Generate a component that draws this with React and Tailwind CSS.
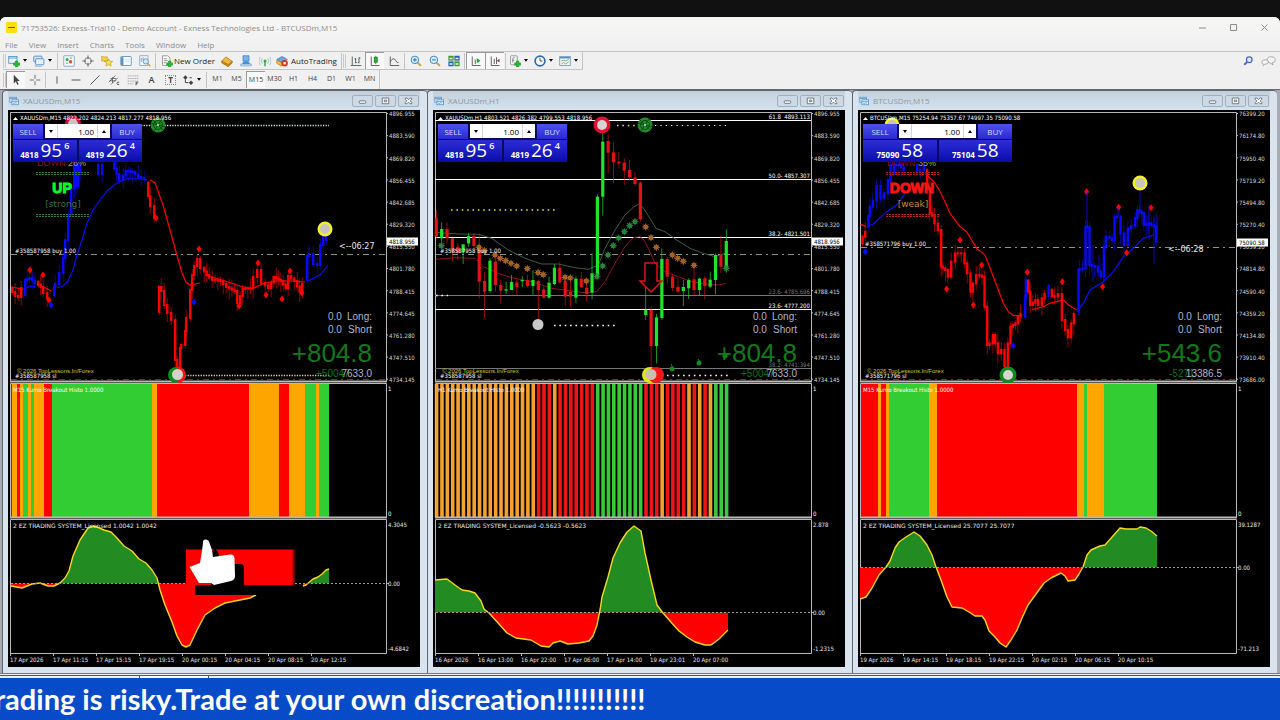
import React from 'react'

const SMALL = 'font-["DejaVu_Sans_Condensed","DejaVu_Sans",sans-serif] text-[6px] whitespace-pre'
const ARIAL = 'font-["Liberation_Sans",sans-serif]'

const metalLabels = ['4896.955', '4883.590', '4869.820', '4856.455', '4842.685', '4829.320', '4815.550', '4801.780', '4788.415', '4774.645', '4761.280', '4747.510', '4734.145']
const btcLabels = ['76399.20', '76174.80', '75950.40', '75719.20', '75494.80', '75270.40', '75039.20', '74814.80', '74590.40', '74359.20', '74134.80', '73910.40', '73686.00']

const RED = '#ff0000'
const BLUE = '#0a0aff'
const GREEN = '#32cd32'
const ORANGE = '#ffa500'

// i -> [bodyTop, bodyBottom, high, low, bull] in thirds of a pixel below y=90
const h1Candles = [
  [385, 440, 360, 445, 0], [417, 445, 397, 475, 1], [417, 445, 397, 460, 0], [445, 485, 445, 515, 0],
  [470, 488, 460, 510, 0], [463, 487, 463, 522, 1], [438, 460, 430, 470, 1], [438, 468, 430, 475, 0],
  [470, 575, 430, 625, 0], [573, 605, 545, 685, 0], [512, 603, 505, 608, 1], [515, 585, 505, 605, 0],
  [585, 602, 570, 640, 0], [598, 602, 575, 612, 1], [576, 600, 555, 600, 1], [577, 592, 570, 615, 0],
  [570, 574, 558, 592, 1], [570, 588, 555, 592, 0], [570, 588, 540, 615, 1], [573, 600, 568, 690, 0],
  [598, 623, 590, 626, 0], [578, 623, 560, 626, 1], [533, 582, 522, 585, 1], [533, 577, 515, 580, 0],
  [573, 620, 560, 648, 0], [605, 620, 570, 650, 0], [566, 623, 560, 640, 1], [566, 592, 545, 595, 0],
  [593, 612, 578, 635, 0], [550, 608, 490, 628, 1], [320, 560, 313, 565, 1], [155, 320, 120, 377, 1],
  [153, 188, 130, 250, 0], [187, 217, 155, 280, 0], [215, 220, 185, 235, 0], [218, 242, 205, 285, 0],
  [240, 262, 210, 272, 0], [262, 282, 245, 288, 0], [278, 388, 275, 395, 0], [660, 675, 590, 690, 1],
  [660, 768, 650, 840, 0], [682, 768, 672, 820, 1], [507, 684, 475, 690, 1], [507, 560, 500, 580, 0],
  [560, 594, 555, 603, 0], [591, 605, 565, 608, 0], [591, 603, 570, 648, 1], [570, 595, 565, 627, 1],
  [568, 600, 530, 615, 0], [566, 600, 563, 615, 1], [565, 588, 558, 628, 0], [569, 590, 545, 595, 1],
  [495, 570, 490, 613, 1], [495, 530, 438, 550, 0], [453, 533, 418, 548, 1],
]

const h1Stars = {
  '#b06a28': [[162, 472], [178, 482], [210, 495], [226, 505], [242, 512], [258, 520], [275, 528], [307, 536], [339, 548], [355, 554], [420, 562], [436, 564], [484, 573], [662, 411], [678, 443], [694, 472], [742, 495], [758, 505], [775, 514], [807, 526]],
  '#2e8b3e': [[49, 467], [516, 560], [533, 528], [549, 495], [565, 467], [581, 444], [598, 425], [614, 407], [630, 395], [904, 535]],
}

const goldTrails = [
  [RED, [[11, 288], [14, 292], [17, 296], [20, 297], [23, 288]]],
  [BLUE, [[24, 295], [26, 280], [31, 278], [36, 283]]],
  [RED, [[37, 282], [42, 287], [46, 293], [50, 298]]],
  [BLUE, [[53, 295], [54, 287], [58, 284], [62, 273], [64, 258], [67, 240], [70, 215], [73, 188], [74, 165]]],
  [BLUE, [[73, 188], [75, 165], [77, 186], [79, 165], [81, 172]]],
  [BLUE, [[97, 165], [101, 174], [104, 165]]],
  [BLUE, [[113, 163], [118, 174], [122, 180], [127, 171], [134, 172], [140, 177], [146, 179]]],
  [RED, [[147, 183], [149, 196], [153, 206], [156, 218]]],
  [RED, [[158, 312], [160, 287], [163, 291], [166, 305], [170, 313], [174, 320], [176, 360], [179, 372], [180, 348], [184, 345], [185, 331], [189, 318], [191, 290], [193, 275], [196, 266], [199, 259], [203, 268], [208, 275], [214, 280], [222, 281], [228, 287], [236, 291], [239, 303], [244, 289], [252, 288], [256, 277], [260, 270], [264, 283], [270, 288], [275, 277], [282, 281], [287, 288], [290, 276], [296, 281], [301, 292], [305, 284]]],
  [BLUE, [[306, 280], [308, 256], [312, 254], [316, 264], [319, 265], [322, 245], [325, 234], [328, 240]]],
]
const goldMAs = [
  [RED, [[11, 287], [17, 288], [23, 289]]],
  [BLUE, [[24, 289], [30, 286], [36, 287]]],
  [RED, [[37, 285], [44, 287], [51, 291]]],
  [BLUE, [[57, 288], [63, 286], [68, 281], [73, 270], [77, 255], [82, 240], [87, 223], [93, 210], [100, 200], [108, 190], [117, 183], [125, 179], [133, 178], [147, 180]]],
  [RED, [[150, 180], [155, 183], [159, 194], [163, 205], [170, 230], [176, 252], [182, 273], [186, 282], [190, 285], [200, 283]]],
  [RED, [[205, 275], [225, 281], [240, 286], [252, 289], [262, 284], [275, 281], [290, 281], [305, 282]]],
  [BLUE, [[308, 281], [314, 278], [320, 275], [328, 265]]],
]
const goldDiamonds = [
  [RED, [[30, 270], [43, 275], [49, 300], [156, 218], [199, 249], [258, 263], [290, 271], [266, 295], [282, 299], [302, 293], [239, 306]]],
  [BLUE, [[51, 305], [194, 302]]],
]

const btcTrails = [
  [RED, [[34, 460], [42, 440], [50, 425]]],
  [BLUE, [[52, 410], [56, 378], [65, 350], [76, 332], [88, 288], [98, 325], [110, 310], [118, 270], [125, 225]]],
  [BLUE, [[128, 250], [135, 225], [150, 225], [165, 240]]],
  [BLUE, [[198, 225], [207, 245], [218, 240], [224, 225]]],
  [RED, [[228, 240], [236, 300], [243, 370], [250, 375], [260, 400], [270, 420], [275, 530], [290, 540], [300, 560], [312, 515], [320, 490], [340, 490], [348, 520], [358, 550], [365, 605], [375, 580], [385, 555], [400, 560], [408, 650], [415, 765], [425, 760], [432, 735], [440, 760], [450, 790], [460, 780], [470, 828], [478, 760], [485, 710], [500, 700], [508, 680], [520, 672]]],
  [BLUE, [[522, 680], [524, 620], [527, 570]]],
  [RED, [[531, 572], [537, 605], [545, 645], [560, 630], [572, 645], [580, 625], [590, 612]]],
  [BLUE, [[592, 618], [598, 588]]],
  [RED, [[602, 600], [610, 618], [620, 620], [632, 612], [642, 690], [650, 720], [660, 742], [668, 700], [678, 672]]],
  [BLUE, [[682, 665], [685, 540], [703, 535], [709, 410], [715, 412], [721, 525], [740, 530], [758, 560], [764, 470], [775, 440], [790, 450], [797, 382], [808, 380], [818, 430], [830, 465], [840, 415], [852, 408], [865, 360], [878, 370], [885, 405], [900, 400], [915, 410], [921, 455]]],
]
const btcMAs = [
  [RED, [[32, 403], [40, 406], [48, 410]]],
  [BLUE, [[55, 408], [70, 402], [85, 388], [110, 365], [140, 345], [165, 310]]],
  [RED, [[232, 258], [250, 273], [265, 295], [280, 325], [300, 370], [330, 410], [350, 425], [380, 475], [405, 495], [430, 560], [460, 640], [475, 665], [490, 677], [510, 677]]],
  [RED, [[545, 660], [580, 650], [600, 640], [640, 630], [655, 645], [680, 660]]],
  [BLUE, [[680, 665], [700, 640], [720, 600], [760, 575], [790, 545], [820, 500], [850, 475], [880, 445], [910, 435]]],
]
const btcDiamonds = [
  [RED, [[290, 597], [330, 450], [370, 645], [395, 525], [532, 547], [637, 575], [710, 305], [806, 352], [903, 353], [830, 488], [758, 590]]],
  [BLUE, [[46, 485], [490, 768]]],
]

const h1Upper = [[32, 427], [100, 432], [160, 433], [200, 445], [250, 480], [300, 505], [350, 522], [400, 522], [450, 533], [490, 538], [520, 525], [540, 475], [570, 420], [600, 375], [625, 352], [640, 343], [652, 350], [675, 385], [693, 415], [720, 425], [755, 450], [795, 475], [835, 490], [870, 500], [900, 490]]
const h1Lower = [[32, 508], [90, 503], [150, 505], [175, 530], [220, 550], [260, 563], [320, 575], [380, 595], [440, 603], [480, 608], [515, 605], [540, 575], [570, 520], [600, 470], [625, 443], [645, 440], [657, 450], [670, 475], [690, 520], [720, 545], [760, 560], [800, 575], [850, 583], [880, 585], [903, 580]]

const goldWave = [[11, 586], [22, 588], [32, 584], [40, 583], [48, 586], [54, 586], [60, 583], [65, 578], [69, 571], [73, 556], [80, 540], [88, 528], [93, 526], [97, 527], [104, 530], [111, 532], [117, 538], [124, 546], [132, 551], [139, 559], [146, 563], [152, 570], [157, 578], [160, 590], [165, 605], [172, 622], [177, 636], [182, 645], [186, 647], [190, 645], [197, 630], [205, 615], [215, 608], [225, 603], [240, 600], [250, 598], [256, 595]]
const goldWaveTail = [[303, 586], [306, 585], [313, 579], [318, 577], [322, 574], [326, 570], [329, 569]]
const h1Wave = [[435, 580], [447, 579], [455, 585], [462, 590], [469, 591], [475, 593], [481, 601], [484, 609], [489, 613], [499, 624], [507, 633], [516, 638], [531, 640], [541, 646], [549, 647], [553, 643], [560, 641], [568, 644], [579, 643], [589, 641], [593, 636], [597, 625], [600, 610], [602, 597], [608, 577], [613, 558], [620, 543], [627, 532], [634, 526], [641, 531], [645, 553], [651, 580], [657, 605], [663, 613], [670, 621], [679, 631], [687, 637], [695, 642], [705, 645], [711, 645], [719, 639], [728, 630]]
const btcWave = [[860, 599], [866, 597], [872, 588], [879, 575], [886, 567], [890, 561], [895, 548], [899, 542], [906, 537], [914, 532], [920, 536], [927, 545], [932, 555], [936, 567], [941, 580], [947, 597], [952, 607], [962, 608], [969, 612], [975, 616], [982, 616], [985, 620], [989, 631], [995, 637], [1000, 643], [1006, 647], [1011, 640], [1017, 630], [1022, 618], [1028, 605], [1036, 594], [1044, 583], [1051, 578], [1061, 573], [1065, 576], [1068, 581], [1075, 580], [1079, 574], [1083, 567], [1087, 555], [1091, 550], [1100, 546], [1105, 545], [1112, 537], [1120, 528], [1126, 529], [1137, 529], [1140, 527], [1146, 528], [1151, 531], [1157, 536]]

// [from, to, color]
const goldBlocks = [[10, 12, RED], [12, 17, ORANGE], [17, 20, RED], [20, 23, ORANGE], [23, 28, GREEN], [28, 31, ORANGE], [31, 34, GREEN], [34, 44, ORANGE], [44, 52, RED], [52, 152, GREEN], [152, 157, ORANGE], [157, 249, RED], [249, 279, ORANGE], [279, 289, RED], [289, 305, ORANGE], [305, 316, GREEN], [316, 319, ORANGE], [319, 329, GREEN]]
const btcBlocks = [[860, 878, RED], [878, 881, ORANGE], [881, 886, RED], [886, 889, ORANGE], [889, 929, GREEN], [929, 937, ORANGE], [937, 1077, RED], [1077, 1084, ORANGE], [1084, 1087, GREEN], [1087, 1104, ORANGE], [1104, 1157, GREEN]]
const h1Blocks = Array.from({ length: 55 }, (_, i) => {
  let color = '#f01515'
  if (i < 19 || [22, 42, 47, 49, 51].includes(i)) color = '#f5a030'
  else if ((i >= 30 && i < 39) || i >= 52) color = '#3cc83c'
  const x = 434.8 + i * 5.37
  return [x, x + 3.6, color]
})

const toPoints = (pts) => pts.map((p) => p.join(',')).join(' ')
const thirds = (ox) => ([x, y]) => [ox + x / 3, 90 + y / 3]
const mapSeries = (series, ox) => series.map(([color, pts]) => [color, pts.map(thirds(ox))])

// Small stepped bodies with wicks between the anchor points
const Trail = ({ color, points }) => {
  const bars = []
  let n = 0
  for (let i = 0; i < points.length - 1; i++) {
    const [x0, y0] = points[i]
    const [x1, y1] = points[i + 1]
    const steps = Math.max(1, Math.round((x1 - x0) / 2.7))
    for (let s = 0; s < steps; s++) {
      const ya = y0 + ((y1 - y0) * s) / steps
      const yb = y0 + ((y1 - y0) * (s + 1)) / steps
      const up = 1 + ((n * 7) % 8)
      const down = 2 + ((n * 5) % 9)
      bars.push({ x: x0 + ((x1 - x0) * s) / steps, top: Math.min(ya, yb) - 1, bottom: Math.max(ya, yb) + 1, up, down })
      n++
    }
  }
  return (
    <g fill={color}>
      {bars.map((b, i) => (
        <React.Fragment key={i}>
          <rect x={b.x} y={b.top} width="2.4" height={b.bottom - b.top} />
          <rect x={b.x + 0.8} y={b.top - b.up} width="0.8" height={b.bottom - b.top + b.up + b.down} opacity="0.7" />
        </React.Fragment>
      ))}
    </g>
  )
}

const Diamond = ({ x, y, color }) => (
  <path d={`M${x} ${y - 3.5}L${x + 2.6} ${y}L${x} ${y + 3.5}L${x - 2.6} ${y}Z`} fill={color} />
)

const Star = ({ x, y, color }) => (
  <g stroke={color}>
    <path
      d={`M${x - 3.5} ${y}h7M${x} ${y - 3.5}v7M${x - 2.5} ${y - 2.5}l5 5M${x + 2.5} ${y - 2.5}l-5 5`}
      strokeWidth="0.9"
    />
    <circle cx={x} cy={y} r="1.8" fill="none" strokeWidth="1.2" />
  </g>
)

const Wheel = ({ x, y }) => (
  <g stroke="#0b4d12" strokeWidth="1">
    <circle cx={x} cy={y} r="7.5" fill="#1f8c2b" stroke="none" />
    <circle cx={x} cy={y} r="4.5" fill="none" />
    <path d={`M${x - 7} ${y - 2}L${x + 7} ${y + 2}M${x - 4} ${y + 6}L${x + 4} ${y - 6}M${x - 5} ${y - 5}L${x + 5} ${y + 5}`} />
    <circle cx={x} cy={y} r="1" fill="#d8e8d0" stroke="none" />
  </g>
)

const Ring = ({ x, y, r = 7.5, color, core = '#c8c4c0' }) => (
  <>
    <circle cx={x} cy={y} r={r} fill={color} />
    <circle cx={x} cy={y} r={5} fill={core} />
  </>
)

const Dots = ({ x1, x2, y, color = '#fff', step = 5.37, size = 1.6 }) => (
  <line x1={x1} x2={x2} y1={y} y2={y} stroke={color} strokeWidth={size} strokeDasharray={`${size} ${step - size}`} />
)

const Series = ({ trails, mas, diamonds }) => (
  <>
    {mas.map(([color, pts], i) => (
      <polyline key={`m${i}`} points={toPoints(pts)} fill="none" stroke={color} strokeWidth="1.2" />
    ))}
    {trails.map(([color, pts], i) => <Trail key={`t${i}`} color={color} points={pts} />)}
    {diamonds.map(([color, pts]) => pts.map(([x, y]) => <Diamond key={`${x}-${y}`} x={x} y={y} color={color} />))}
  </>
)

const GoldM15 = () => (
  <>
    <Dots x1={141} x2={329} y={125.5} step={2.6} size={1.3} color="#cfe0cf" />
    <Series trails={goldTrails} mas={goldMAs} diamonds={goldDiamonds} />
    <Ring x={73} y={124} color="#d01030" r={8} />
    <Wheel x={158} y={125} />
    <Ring x={325} y={229} color="#f5f020" />
    <Dots x1={185} x2={330} y={375.5} step={2.6} size={1.3} color="#e8c8b0" />
    <circle cx="176" cy="375" r="8" fill="#0f8a1e" />
    <path d="M178 367a8 8 0 0 1 0 16z" fill="#f01818" />
    <circle cx="177.500" cy="374.500" r="5.500" fill="#d8d0cc" />
  </>
)

const GoldH1 = () => {
  const place = thirds(425)
  const levels = [
    [120.5, '61.8  4893.113', '#fff'], [179.5, '50.0- 4857.307', '#fff'], [237.5, '38.2- 4821.501', '#fff'],
    [295.5, '23.6- 4785.696', '#777'], [309.5, '23.6- 4777.200', '#fff'], [368.5, '38.2- 4741.394', '#777'],
  ]
  return (
    <>
      {levels.map(([y, label, color]) => (
        <g key={label}>
          <line x1="435" x2="811" y1={y} y2={y} stroke={color} strokeWidth="1" />
          <text x="810" y={y - 2} textAnchor="end" fill={color} className={SMALL}>{label}</text>
        </g>
      ))}
      <polyline points={toPoints(h1Upper.map(place))} fill="none" stroke="#3f5a46" strokeWidth="1" />
      <polyline points={toPoints(h1Lower.map(place))} fill="none" stroke="#8e1424" strokeWidth="1" />
      {h1Candles.map(([top, bottom, high, low, bull], i) => {
        const x = 436.3 + i * 5.37
        return (
          <g key={i} fill={bull ? '#1fe52a' : '#e01414'}>
            <rect x={x - 0.4} y={90 + high / 3} width="0.8" height={(low - high) / 3} opacity="0.8" />
            <rect x={x - 1.6} y={90 + top / 3} width="3.2" height={(bottom - top) / 3} />
          </g>
        )
      })}
      {Object.entries(h1Stars).map(([color, pts]) =>
        pts.map(place).map(([x, y]) => <Star key={`${x}-${y}`} x={x} y={y} color={color} />)
      )}
      <Dots x1={451} x2={556} y={210} color="#e8e040" />
      <Dots x1={554} x2={615} y={325.5} />
      <Dots x1={617} x2={640} y={125.5} color="#e8e040" />
      <Dots x1={655} x2={728} y={125.5} size={1.2} />
      <Dots x1={436} x2={448} y={295.5} />
      <Dots x1={667} x2={728} y={375.5} />
      <Ring x={602} y={125} r={8.5} color="#e01030" core="#d8d4d4" />
      <Wheel x={645} y={125} />
      <circle cx="538" cy="324.500" r="5.500" fill="#c8c8c8" />
      <circle cx="650" cy="375" r="8" fill="#d8e81c" />
      <circle cx="656" cy="375" r="8" fill="#f01818" />
      <circle cx="651" cy="374.500" r="5.500" fill="#c8c0b0" />
      <path d="M645 263H657V281H662L651 292L640 281H645Z" fill="none" stroke="#e81010" strokeWidth="1.500" />
      <g fill="#178a20">
        <circle cx="672" cy="369" r="2.500" />
        <circle cx="699" cy="363" r="2.500" />
        <circle cx="725" cy="356" r="2.500" />
      </g>
      <path d="M671 364l2 4M698 359l2 3M724 351l2 4" stroke="#178a20" />
    </>
  )
}

const BtcM15 = () => (
  <>
    <Series trails={mapSeries(btcTrails, 850)} mas={mapSeries(btcMAs, 850)} diamonds={mapSeries(btcDiamonds, 850)} />
    <path d="M1087 192V226M1118 208V218M1140 190V210M1149 205V240M1154 216V264M1157 215V238M1093 245V282M1099 255V276M1104 258V280" stroke={BLUE} strokeWidth="0.800" />
    <Ring x={892} y={125} color="#f5f020" />
    <Ring x={1140} y={183} color="#f5f020" />
    <Ring x={1008} y={375} r={8.5} color="#0f8a1e" core="#d8d4d0" />
  </>
)

const Trend = ({ x, trend, strength, percent, color, lineColor, strengthColor }) => (
  <g>
    <text x={x + 1} y="166" fill="#8e1018" className={`${ARIAL} text-[9px]`}>
      DOWN <tspan fill="#b0a030">{percent}</tspan>
    </text>
    {[172, 174, 214, 216].map((y) => (
      <line key={y} x1={x} x2={x + 53} y1={y + 0.5} y2={y + 0.5} stroke={lineColor} strokeDasharray="2 1" />
    ))}
    <text x={x + 26} y="193" textAnchor="middle" fill={color} stroke={color} strokeWidth="1" className='font-["Liberation_Sans_Narrow","Liberation_Sans",sans-serif] text-[14px] font-bold'>{trend}</text>
    <text x={x + 27} y="207" textAnchor="middle" fill={strengthColor} className='font-["DejaVu_Sans",sans-serif] text-[9px]'>{strength}</text>
  </g>
)

const PricePane = ({ win, children }) => {
  const { x, labels, header, bidLine, order, tag, tagY, timer, profit, sub, total, trend } = win
  return (
    <svg viewBox={`${x} 110 412 273`} className="block w-full">
      <g fill="none" stroke="#b8b8b8" strokeWidth="1">
        <path d={`M${x + 2.5} 381V112.5H${x + 378.5}V381`} />
        <path d={`M${x + 2} 381.5H${x + 379}`} strokeWidth="2" />
      </g>
      <line x1={x + 3} x2={x + 378} y1={bidLine} y2={bidLine} stroke="#7d9882" strokeDasharray="6 4 2 4" />
      <line x1={x + 3} x2={x + 378} y1="379.500" y2="379.500" stroke="#a01824" strokeDasharray="6 4 2 4" />
      {children}
      {trend && <Trend x={x + 28} {...trend} />}
      <g fill="#fff" className={SMALL}>
        <path d={`M${x + 5} 120l2.500 -3l2.500 3z`} />
        <text x={x + 12} y="120">{header}</text>
        {labels.map((label, i) => (
          <g key={label}>
            <text x={x + 381} y={116.3 + i * 22.15} fill="#d8d8d8">{label}</text>
            <line x1={x + 378} x2={x + 380} y1={113.5 + i * 22.15} y2={113.5 + i * 22.15} stroke="#b8b8b8" />
          </g>
        ))}
        <rect x={x + 379} y={tagY - 4} width="31" height="8" />
        <text x={x + 381} y={tagY + 2} fill="#000">{tag}</text>
        <text x={x + 7} y={bidLine - 1.5}>{order} buy 1.00</text>
        <text x={x + 7} y="378">{order} sl</text>
      </g>
      <text x={x + 9} y="373" fill="#d8c82c" className={`${ARIAL} text-[6px]`}>© 2026 TopLessons.In/Forex</text>
      {timer && <text x={timer.x} y={timer.y} fill="#e8e8e8" className='font-["DejaVu_Sans",sans-serif] text-[8px]'>&lt;--{timer.value}</text>}
      <g fill="#b0b4cc" className={`${ARIAL} text-[10px]`}>
        <text x={x + 320} y="320">0.0</text>
        <text x={x + 364} y="320" textAnchor="end">Long:</text>
        <text x={x + 320} y="333">0.0</text>
        <text x={x + 364} y="333" textAnchor="end">Short</text>
        <text x={win.subX} y="377" fill="#14701c">{sub}</text>
        <text x={x + 364} y="377" textAnchor="end">{total}</text>
      </g>
      <text x={x + 364} y="362" textAnchor="end" fill="#127a18" className={`${ARIAL} text-[26px]`}>{profit}</text>
    </svg>
  )
}

const HistoPane = ({ win, blocks }) => (
  <svg viewBox={`${win.x} 383 412 136`} className="block w-full">
    {blocks.map(([from, to, color]) => (
      <rect key={from} x={from} y="384" width={to - from} height="133" fill={color} />
    ))}
    <g fill="none" stroke="#b8b8b8">
      <path d={`M${win.x + 2.5} 517V383.5H${win.x + 378.5}V517`} />
      <path d={`M${win.x + 2} 517.500H${win.x + 379}`} strokeWidth="2" />
    </g>
    <g fill="#fff" className={SMALL}>
      <text x={win.x + 5} y="391.500">{win.period} Kumo Breakout Histo 1.0000</text>
      <text x={win.x + 380} y="391">1</text>
      <text x={win.x + 380} y="515.500">0</text>
    </g>
  </svg>
)

const Wave = ({ id, points, zero }) => {
  const first = points[0][0]
  const last = points[points.length - 1][0]
  const area = `${first},${zero} ${toPoints(points)} ${last},${zero}`
  return (
    <>
      <clipPath id={`${id}-up`}><rect x={first} y="520" width={last - first} height={zero - 520} /></clipPath>
      <clipPath id={`${id}-down`}><rect x={first} y={zero} width={last - first} height={654 - zero} /></clipPath>
      <polygon points={area} fill="#228b22" clipPath={`url(#${id}-up)`} />
      <polygon points={area} fill="#ff0000" clipPath={`url(#${id}-down)`} />
      <polyline points={toPoints(points)} fill="none" stroke="#f5d820" strokeWidth="1.400" strokeLinejoin="round" />
    </>
  )
}

const LikeBadge = () => (
  <>
    <defs>
      <linearGradient id="badge-fade">
        <stop offset="0.970" stopColor="#ff0000" />
        <stop offset="1" stopColor="#400000" />
      </linearGradient>
    </defs>
    <rect x="186" y="549.500" width="109" height="35.500" fill="url(#badge-fade)" />
    <path d="M195 585V595H244V568Q244 564 240 564H234L219 557Q219 551 215 549L211 552V585Z" fill="#000" />
    <rect x="195" y="585" width="107" height="10" fill="#000" />
    <path d="M203 543C202 539 208 538 209.500 543L212 550L213 557L230 554.500Q234 554 234.500 558L235 576Q235 580 231 581L214 585L211 583L199 583L189.500 567Q196 564.500 200 563Q202 552 203 543Z" fill="#fff" />
  </>
)

const WavePane = ({ win, points, tail }) => (
  <svg viewBox={`${win.x} 519 412 148`} className="block w-full">
    <path d={`M${win.x + 2.5} 653.500V519.500H${win.x + 378.5}V653.500H${win.x + 2}`} fill="none" stroke="#b8b8b8" />
    <Wave id={win.id} points={points} zero={win.zero} />
    {tail && <Wave id={`${win.id}-tail`} points={tail} zero={win.zero} />}
    <line x1={win.x + 3} x2={win.x + 381} y1={win.zero} y2={win.zero} stroke="#9a9a9a" strokeDasharray="2 2" />
    {tail && <LikeBadge />}
    <text x={win.x + 5} y="528" fill="#e8e8e8" className='font-["DejaVu_Sans",sans-serif] text-[6px]'>2 EZ TRADING SYSTEM_Licensed {win.wave}</text>
    <g fill="#e8e8e8" className={SMALL}>
      <text x={win.x + 380} y="526.500">{win.max}</text>
      <text x={win.x + 380} y={win.zero + 2}>0.00</text>
      <text x={win.x + 380} y="651">{win.min}</text>
      {win.times.map((time, i) => (
        <g key={time}>
          <line x1={win.x + 2.5 + i * 43} x2={win.x + 2.5 + i * 43} y1="653" y2="656" stroke="#b8b8b8" />
          <text x={win.x + 2 + i * 43} y="662">{time}</text>
        </g>
      ))}
    </g>
  </svg>
)

const Quote = ({ small, big, sup }) => (
  <button className="flex h-[22px] flex-1 items-end justify-center gap-[2px] bg-linear-to-b from-[#2c2cd8] to-[#0a0aa8] pb-[2px] text-white">
    <span className="text-[8px] leading-[10px] font-bold">{small}</span>
    <span className="text-[19px] leading-[19px]">{big}</span>
    {sup && <span className="self-start text-[9px] leading-[11px] font-semibold">{sup}</span>}
  </button>
)

const OneClick = ({ win }) => (
  <div className={`absolute top-[14px] left-[5px] flex flex-col gap-px bg-[#0a0a60] ${win.wide ? 'w-[149px]' : 'w-[129px]'}`}>
    <div className="flex h-[15px] gap-[2px]">
      <button className="flex-1 bg-linear-to-b from-[#5050f0] to-[#2828d0] text-[8px] leading-[15px] text-[#d8d8ff]">SELL</button>
      <div className={`flex h-[14px] items-center bg-white text-black ${win.wide ? 'w-[77px]' : 'w-[65px]'}`}>
        <button aria-label="Decrease volume" className="flex h-full w-[13px] items-center justify-center border-r border-gray-300">
          <svg viewBox="0 0 4 3" className="w-[4px]"><path d="M0 0h4L2 3z" /></svg>
        </button>
        <input aria-label="Volume" defaultValue="1.00" className="h-full min-w-0 flex-1 pr-[3px] text-right text-[8px] outline-none" />
        <button aria-label="Increase volume" className="flex h-full w-[13px] items-center justify-center border-l border-gray-300">
          <svg viewBox="0 0 4 3" className="w-[4px]"><path d="M0 3h4L2 0z" /></svg>
        </button>
      </div>
      <button className="flex-1 bg-linear-to-b from-[#5050f0] to-[#2828d0] text-[8px] leading-[15px] text-[#d8d8ff]">BUY</button>
    </div>
    <div className="flex gap-[2px]">
      {win.quotes.map((q) => <Quote key={q.small} {...q} />)}
    </div>
  </div>
)

const up = { trend: 'UP', strength: '[strong]', percent: '26%', color: '#00ff2a', lineColor: '#2c7a34', strengthColor: '#3c6e44' }
const down = { trend: 'DOWN', strength: '[weak]', percent: '35%', color: '#ff1414', lineColor: '#c01818', strengthColor: '#d08838' }
const goldQuotes = [{ small: '4818', big: '95', sup: '6' }, { small: '4819', big: '26', sup: '4' }]

const windows = [
  {
    id: 'gold-m15', title: 'XAUUSDm,M15', period: 'M15', x: 8, labels: metalLabels, header: 'XAUUSDm,M15   4822.202  4824.213  4817.277  4818.956',
    bidLine: 254.5, order: '#358587958', tag: '4818.956', tagY: 241.5, timer: { x: 339, y: 249, value: '06:27' },
    profit: '+804.8', sub: '+50047', subX: 316, total: '7633.0', trend: up, quotes: goldQuotes,
    zero: 583.5, wave: '1.0042 1.0042', max: '4.3045', min: '-4.6842', chart: GoldM15, blocks: goldBlocks, points: goldWave, tail: goldWaveTail,
    times: ['17 Apr 2026', '17 Apr 11:15', '17 Apr 15:15', '17 Apr 19:15', '20 Apr 00:15', '20 Apr 04:15', '20 Apr 08:15', '20 Apr 12:15'],
  },
  {
    id: 'gold-h1', title: 'XAUUSDm,H1', period: 'H1', x: 433, labels: metalLabels, header: 'XAUUSDm,H1   4803.521  4826.382  4799.553  4818.956',
    bidLine: 254.5, order: '#358587958', tag: '4818.956', tagY: 241.5,
    profit: '+804.8', sub: '+50047', subX: 741, total: '7633.0', quotes: goldQuotes,
    zero: 612.5, wave: '-0.5623 -0.5623', max: '2.878', min: '-1.2315', chart: GoldH1, blocks: h1Blocks, points: h1Wave,
    times: ['16 Apr 2026', '16 Apr 13:00', '16 Apr 22:00', '17 Apr 06:00', '17 Apr 14:00', '19 Apr 23:01', '20 Apr 07:00'],
  },
  {
    id: 'btc-m15', title: 'BTCUSDm,M15', period: 'M15', x: 858, labels: btcLabels, header: 'BTCUSDm,M15   75254.94  75357.67  74997.35  75090.58', wide: true,
    bidLine: 247.5, order: '#358571796', tag: '75090.58', tagY: 242.5, timer: { x: 1168, y: 252, value: '06:28' },
    profit: '+543.6', sub: '-5271', subX: 1169, total: '13386.5', trend: down, quotes: [{ small: '75090', big: '58' }, { small: '75104', big: '58' }],
    zero: 567.5, wave: '25.7077 25.7077', max: '39.1287', min: '-71.213', chart: BtcM15, blocks: btcBlocks, points: btcWave,
    times: ['19 Apr 2026', '19 Apr 14:15', '19 Apr 18:15', '19 Apr 22:15', '20 Apr 02:15', '20 Apr 06:15', '20 Apr 10:15'],
  },
]

const frameIcons = {
  Minimize: <rect x="4" y="6" width="8" height="3" rx="1" />,
  Restore: <path d="M4 2.500h8v7H4zM6.500 5h3v2h-3z" />,
  Close: <path d="M4 2.500h2l2 2l2 -2h2v1.500l-2 2l2 2v1.500h-2l-2 -2l-2 2H4V8l2 -2l-2 -2z" />,
}

const ChartWindow = ({ win }) => {
  const Chart = win.chart
  return (
    <section className="rounded-t border-t border-l border-[#5d6670] bg-[#d9e4ee] pr-[7px] pb-[6px] pl-[5px]">
      <header className="flex h-[19px] items-center gap-1 bg-linear-to-b from-[#c3d0da] to-[#d4e3ef] pt-px">
        <svg viewBox="0 0 12 12" className="ml-px w-[10px]" fill="#e6f1fa" stroke="#5b97c9">
          <rect x="1" y="1.500" width="8" height="6" />
          <path d="M1 3h8" />
          <rect x="3.500" y="4.500" width="8" height="6" />
          <path d="M3.500 6.500h8M5 8.500l1.500 0.500l1.500 -1l1.500 0.500" />
        </svg>
        <h2 className="flex-1 text-[8px] text-[#8b98a4]">{win.title}</h2>
        <div className="flex gap-[2px] pr-px">
          {Object.entries(frameIcons).map(([name, shape]) => (
            <button key={name} aria-label={name} className="flex h-[12px] w-[21px] items-center justify-center rounded-[2px] border border-[#9fb0c0] bg-[#cddae5]">
              <svg viewBox="0 0 16 12" className="w-[13px]" fill="#fff" stroke="#56626e">{shape}</svg>
            </button>
          ))}
        </div>
      </header>
      <div className="relative bg-black">
        <PricePane win={win}><Chart /></PricePane>
        <HistoPane win={win} blocks={win.blocks} />
        <WavePane win={win} points={win.points} tail={win.tail} />
        <OneClick win={win} />
      </div>
    </section>
  )
}

const plus = <path d="M10 8h3v2.500h2.500v3H13V16h-3v-2.500H7.500v-3H10z" fill="#1fbf2a" stroke="#0c8a18" strokeWidth="0.700" />
const icons = {
  newChart: <><rect x="1" y="2" width="11" height="9" fill="#eaf3fb" stroke="#3a86c8" /><path d="M1 4h11" stroke="#3a86c8" />{plus}</>,
  profiles: <><rect x="1" y="1.500" width="11" height="8" rx="1" fill="#cfe4f7" stroke="#3a7cc0" /><rect x="3.500" y="5" width="11" height="8" rx="1" fill="#e6f1fb" stroke="#3a7cc0" /><path d="M3 13.500v1.500h9" stroke="#7aa6d0" /></>,
  marketWatch: <><rect x="1" y="1" width="14" height="14" rx="1" fill="#f4faff" stroke="#5c9ad0" /><circle cx="5.500" cy="6" r="2" fill="#2fae3a" /><circle cx="10" cy="9" r="2.200" fill="#e0492c" /><path d="M9 4h3M4 11h3" stroke="#2fae3a" /></>,
  dataWindow: <><circle cx="8" cy="8" r="4.500" fill="none" stroke="#777" strokeWidth="1.300" /><path d="M8 0.500v5M8 10.500v5M0.500 8h5M10.500 8h5" stroke="#666" strokeWidth="1.300" /></>,
  navigator: <><path d="M1 1.500l2.500 1h5V8H1z" fill="#f6d24a" stroke="#b8901c" strokeWidth="0.800" /><path d="M10 5l1.500 3.200l4 0.300l-3 2.500l1 3.800l-3.500 -2l-3.500 2l1 -3.800L4.500 8.500l4 -0.300z" fill="#ffe14d" stroke="#b8901c" strokeWidth="0.800" /></>,
  terminal: <><rect x="1" y="2" width="14" height="12" rx="1" fill="#f5f9fd" stroke="#4282b8" /><rect x="1.500" y="3" width="3" height="10.500" fill="#4f8ec6" /><path d="M7 6h6M7 8.500h6" stroke="#c8dcec" /></>,
  tester: <><rect x="1" y="1" width="11" height="13" fill="#f0f5fa" stroke="#7f9fba" /><path d="M3 4v5M5.500 3v4" stroke="#5f86a8" /><circle cx="9" cy="8.500" r="3.500" fill="#cfe8f8" stroke="#4a8ac0" /><path d="M11.500 11l3.500 4" stroke="#d0a030" strokeWidth="2" /></>,
  newOrder: <><path d="M2 1h7l3 3v10H2z" fill="#f6f6f6" stroke="#888" /><path d="M4 5h4M4 7.500h5M4 10h3" stroke="#888" />{plus}</>,
  book: <><path d="M1 8l5.500 -5.500l8.500 6l-5.500 4.500z" fill="#f0b83a" stroke="#a87414" /><path d="M1 8v2.500l8.500 5L15 10.500V8.500L9.500 13z" fill="#d08e1c" stroke="#a87414" /></>,
  account: <><path d="M4 1h8v7H4z" fill="#7ab4ea" stroke="#3a80c4" /><path d="M3 12q0 -4 5 -4t5 4z" fill="#4a90d8" /><path d="M1 12h14v2.500H1z" fill="#cfe2f4" stroke="#5c8ebc" strokeWidth="0.800" /></>,
  signals: <><circle cx="8" cy="8" r="2" fill="#38a848" /><path d="M4.500 4.500a5 5 0 0 0 0 7M11.500 4.500a5 5 0 0 1 0 7M2 2.500a8 8 0 0 0 0 11M14 2.500a8 8 0 0 1 0 11" fill="none" stroke="#8fb4b4" /><path d="M8 9v6" stroke="#38a848" strokeWidth="2" /></>,
  auto: <><path d="M1 6l7 -4l7 4l-7 4z" fill="#6aa8dc" stroke="#3a78b0" /><path d="M1 7v4l6 4V10z" fill="#f0c040" stroke="#b08820" /><circle cx="11.500" cy="11" r="4.300" fill="#e03020" /><rect x="10" y="9.500" width="3" height="3" fill="#fff" /></>,
  bars: <path d="M3 2v12h12M1 14h2M7.500 4v7M7.500 5H6M7.500 10H9M12 3v8M12 4h2M12 10h-1.500" fill="none" stroke="#4d5a50" strokeWidth="1.200" />,
  candles: <><path d="M3 2v12h11" fill="none" stroke="#555" strokeWidth="1.200" /><path d="M9 1v11" stroke="#0d7a1c" /><rect x="7" y="3" width="4" height="6.500" fill="#25b535" stroke="#0d7a1c" /></>,
  line: <path d="M3 2v12h12M3 9q4 -7 7 -2t4 3" fill="none" stroke="#555" strokeWidth="1.200" />,
  zoomIn: <><path d="M9.500 9.500l5 5" stroke="#d0a030" strokeWidth="2.500" /><circle cx="6.500" cy="6.500" r="5" fill="#d4ecfb" stroke="#3a88c4" strokeWidth="1.300" /><path d="M4 6.500h5M6.500 4v5" stroke="#2a70b0" strokeWidth="1.300" /></>,
  zoomOut: <><path d="M9.500 9.500l5 5" stroke="#d0a030" strokeWidth="2.500" /><circle cx="6.500" cy="6.500" r="5" fill="#d4ecfb" stroke="#3a88c4" strokeWidth="1.300" /><path d="M4 6.500h5" stroke="#2a70b0" strokeWidth="1.300" /></>,
  tile: <><rect x="0.500" y="1" width="7" height="6.500" fill="#3c9a34" /><rect x="8.500" y="1" width="7" height="6.500" fill="#2a62a8" /><rect x="0.500" y="8.500" width="7" height="6.500" fill="#2a62a8" /><rect x="8.500" y="8.500" width="7" height="6.500" fill="#3c9a34" /><path d="M2 4.500h4M10 4.500h4M2 12h4M10 12h4" stroke="#e8f4e4" strokeWidth="2" /></>,
  autoScroll: <><path d="M3 2v12h11M7 6v6" fill="none" stroke="#555" strokeWidth="1.200" /><path d="M9 4l5 3.500l-5 3.500z" fill="#22a832" /></>,
  shift: <><path d="M3 2v12h11M7 5v7M10 3v9" fill="none" stroke="#555" strokeWidth="1.200" /><path d="M14 5l-3.500 2.500l3.500 2.500z" fill="#8a3a3a" /></>,
  indicators: <><rect x="2" y="1" width="9" height="12" rx="1" fill="#f2f2f2" stroke="#888" /><path d="M5 10V5q0 -2 2.500 -1.500M4 7h3" fill="none" stroke="#777" />{plus}</>,
  clock: <><circle cx="8" cy="8" r="6.500" fill="#f4f9fd" stroke="#2a68a8" strokeWidth="2.200" /><path d="M8 4v4h3" fill="none" stroke="#444" strokeWidth="1.200" /></>,
  template: <><rect x="1" y="2" width="14" height="12" fill="#f2f6f8" stroke="#5a90bc" /><path d="M1 3.500h14" stroke="#5a90bc" strokeWidth="2" /><path d="M3 8l3 -1l3 1l4 -2M3 12l3 -2l3 2l4 -3" fill="none" stroke="#5a9a60" /></>,
  cursor: <path d="M5 1v11.500l2.800 -2.500l2 4.500l1.700 -0.800l-2 -4.300H13z" fill="#444" />,
  cross: <path d="M8 1v5.500M8 9.500V15M1 8h5.500M9.500 8H15" stroke="#666" strokeWidth="1.200" />,
  vline: <path d="M8 3v10" stroke="#555" strokeWidth="1.300" />,
  hline: <path d="M2 8h12" stroke="#555" strokeWidth="1.300" />,
  trend: <path d="M2 14L14 2" stroke="#555" strokeWidth="1.300" />,
  channel: <><path d="M1 11L10 2M4 14L13 5M3 6h8M2 9h9M6 12V4" stroke="#555" /><path d="M15 11q-3 -1 -3 1.500t3 1.500" fill="none" stroke="#333" /></>,
  fibo: <><path d="M1 2.500h14M1 6h14M1 9.500h14M1 13h8" stroke="#999" strokeDasharray="1.500 1" strokeWidth="1.200" /><path d="M12 15v-4h3M12 13h2" fill="none" stroke="#333" /></>,
  arrows: <><path d="M1.500 4.500l3 -3l3 3l-3 3zM9 11.500l3 -3l3 3l-3 3z" fill="#444" /><path d="M4.500 7v4.500h4M13 5h-3" stroke="#444" fill="none" strokeWidth="1.300" /></>,
}

const Icon = ({ name }) => <svg viewBox="0 0 16 16" className="w-[12px] shrink-0" fill="none">{icons[name]}</svg>
const Grip = () => <span className="h-[14px] w-[3px] shrink-0 border-r border-l border-[#c8c8c8]" />
const Sep = () => <span className="mx-px h-[16px] w-px shrink-0 bg-[#c4c4c4]" />

const Tool = ({ name, active, children }) => (
  <button aria-label={name} className={`flex h-[17px] w-[19px] shrink-0 items-center justify-center ${active ? 'border-t border-l border-[#9a9a9a] bg-[#f8f8f8]' : ''}`}>
    {children || <Icon name={name} />}
  </button>
)

const DropTool = ({ name }) => (
  <button aria-label={name} className="flex h-[17px] w-[25px] shrink-0 items-center gap-[3px] pl-[2px]">
    <Icon name={name} />
    <svg viewBox="0 0 6 4" className="w-[4px]"><path d="M0 0h6L3 4z" /></svg>
  </button>
)

const Toolbars = () => (
  <div className="border-t border-[#c4c4c4] bg-[#f0f0f0] pl-[3px] text-[8px] text-[#1c1c1c]">
    <div className="flex">
      <div className="flex h-[18px] items-center border-r border-b border-[#c4c4c4]">
        <Grip />
        <DropTool name="newChart" />
        <DropTool name="profiles" />
        <Sep />
        {['marketWatch', 'dataWindow', 'navigator', 'terminal', 'tester'].map((n) => <Tool key={n} name={n} />)}
        <Sep />
        <button className="flex w-[60px] items-center gap-px pl-[4px] whitespace-nowrap"><Icon name="newOrder" />New Order</button>
        {['book', 'account', 'signals'].map((n) => <Tool key={n} name={n} />)}
        <button className="flex w-[66px] items-center gap-[3px] pl-[2px] whitespace-nowrap"><Icon name="auto" />AutoTrading</button>
        <Sep />
        <Grip />
        <Tool name="bars" />
        <Tool name="candles" active />
        <Tool name="line" />
        <Sep />
        {['zoomIn', 'zoomOut', 'tile'].map((n) => <Tool key={n} name={n} />)}
        <Sep />
        <Tool name="autoScroll" active />
        <Tool name="shift" active />
        <Sep />
        {['indicators', 'clock', 'template'].map((n) => <DropTool key={n} name={n} />)}
      </div>
      <div className="flex flex-1 items-center justify-end gap-2 pr-1">
        <button aria-label="Search">
          <svg viewBox="0 0 16 16" className="w-[10px]" fill="#dfeafa" stroke="#4a68b8" strokeWidth="2"><path d="M7 9l-5 5" strokeWidth="3" /><circle cx="10" cy="6" r="4.500" /></svg>
        </button>
        <button aria-label="Chat">
          <svg viewBox="0 0 20 14" className="w-[15px]" fill="#f4f4f4" stroke="#9a9a9a"><path d="M8 5q0 -4 5.500 -4t5.500 4t-4 4l1 3l-4 -3q-4 0 -4 -4z" /><path d="M1 8q0 -3 4.500 -3T10 8t-5 3l-2 2v-2.500Q1 10 1 8z" /></svg>
        </button>
      </div>
    </div>
    <div className="flex h-[19px] w-fit items-center border-r border-[#c4c4c4] text-[7px] text-[#444]">
      <Grip />
      <Tool name="cursor" active />
      <Tool name="cross" />
      <Sep />
      {['vline', 'hline', 'trend', 'channel', 'fibo'].map((n) => <Tool key={n} name={n} />)}
      <Tool name="text"><span className="text-[9px] font-semibold">A</span></Tool>
      <Tool name="label"><span className="border border-dotted border-[#888] px-[2px] text-[8px] leading-[8px] font-bold">T</span></Tool>
      <DropTool name="arrows" />
      <Sep />
      {['M1', 'M5', 'M15', 'M30', 'H1', 'H4', 'D1', 'W1', 'MN'].map((p) => <Tool key={p} name={p} active={p === 'M15'}>{p}</Tool>)}
    </div>
  </div>
)

const TitleBar = () => (
  <header className="bg-linear-to-b from-[#f6f7f5] to-[#eff0ef] text-[#8c8c8c]">
    <div className="flex h-[21px] items-center pl-[6px]">
      <svg viewBox="0 0 11 11" className="w-[11px]"><rect width="11" height="11" rx="1" fill="#ffdf10" /><path d="M2 5.500h7" stroke="#6a5a10" /></svg>
      <h1 className="ml-1 flex-1 text-[8px]">71753526: Exness-Trial10 - Demo Account - Exness Technologies Ltd - BTCUSDm,M15</h1>
      <div className="flex">
        {[['Minimize', 'M1 5h7'], ['Maximize', 'M1.500 1.500h6v6h-6z'], ['Close', 'M1.500 1.500l6 6M7.500 1.500l-6 6']].map(([name, d]) => (
          <button key={name} aria-label={name} className="flex w-[31px] justify-center">
            <svg viewBox="0 0 9 9" className="w-[9px]" fill="none" stroke="#8c8c8c"><path d={d} /></svg>
          </button>
        ))}
      </div>
    </div>
    <nav className="flex h-[13px] items-center gap-[11px] pl-[5px] text-[8px] leading-[11px]">
      {['File', 'View', 'Insert', 'Charts', 'Tools', 'Window', 'Help'].map((m) => <a key={m} href="#">{m}</a>)}
    </nav>
  </header>
)

export default function App() {
  return (
    <div className='flex min-h-screen flex-col overflow-hidden bg-[#111] pt-[17px] font-["Open_Sans",sans-serif]'>
      <div className="overflow-hidden rounded-t-md bg-[#f0f0f0]">
        <TitleBar />
        <Toolbars />
        <main className="grid grid-cols-3 border-t border-[#6a6a6a] bg-[#a8acb2] pr-[3px] pl-[2px]">
          {windows.map((win) => <ChartWindow key={win.id} win={win} />)}
        </main>
        <div className="flex h-[5px] flex-col border-t border-[#777] bg-[#f0f0f0] pt-px">
          <div className="flex flex-1 border-t border-[#555] pl-[139px]">
            <span className="w-[70px] border-r border-l border-[#555] bg-white" />
          </div>
        </div>
      </div>
      <footer className="flex flex-1 items-center overflow-hidden bg-[#084bc8] font-['Lato',sans-serif]">
        <p className="-ml-5 text-[29px] leading-[42px] font-bold whitespace-nowrap text-white [font-variant-ligatures:none]">Trading is risky.Trade at your own discreation!!!!!!!!!!!</p>
      </footer>
    </div>
  )
}
